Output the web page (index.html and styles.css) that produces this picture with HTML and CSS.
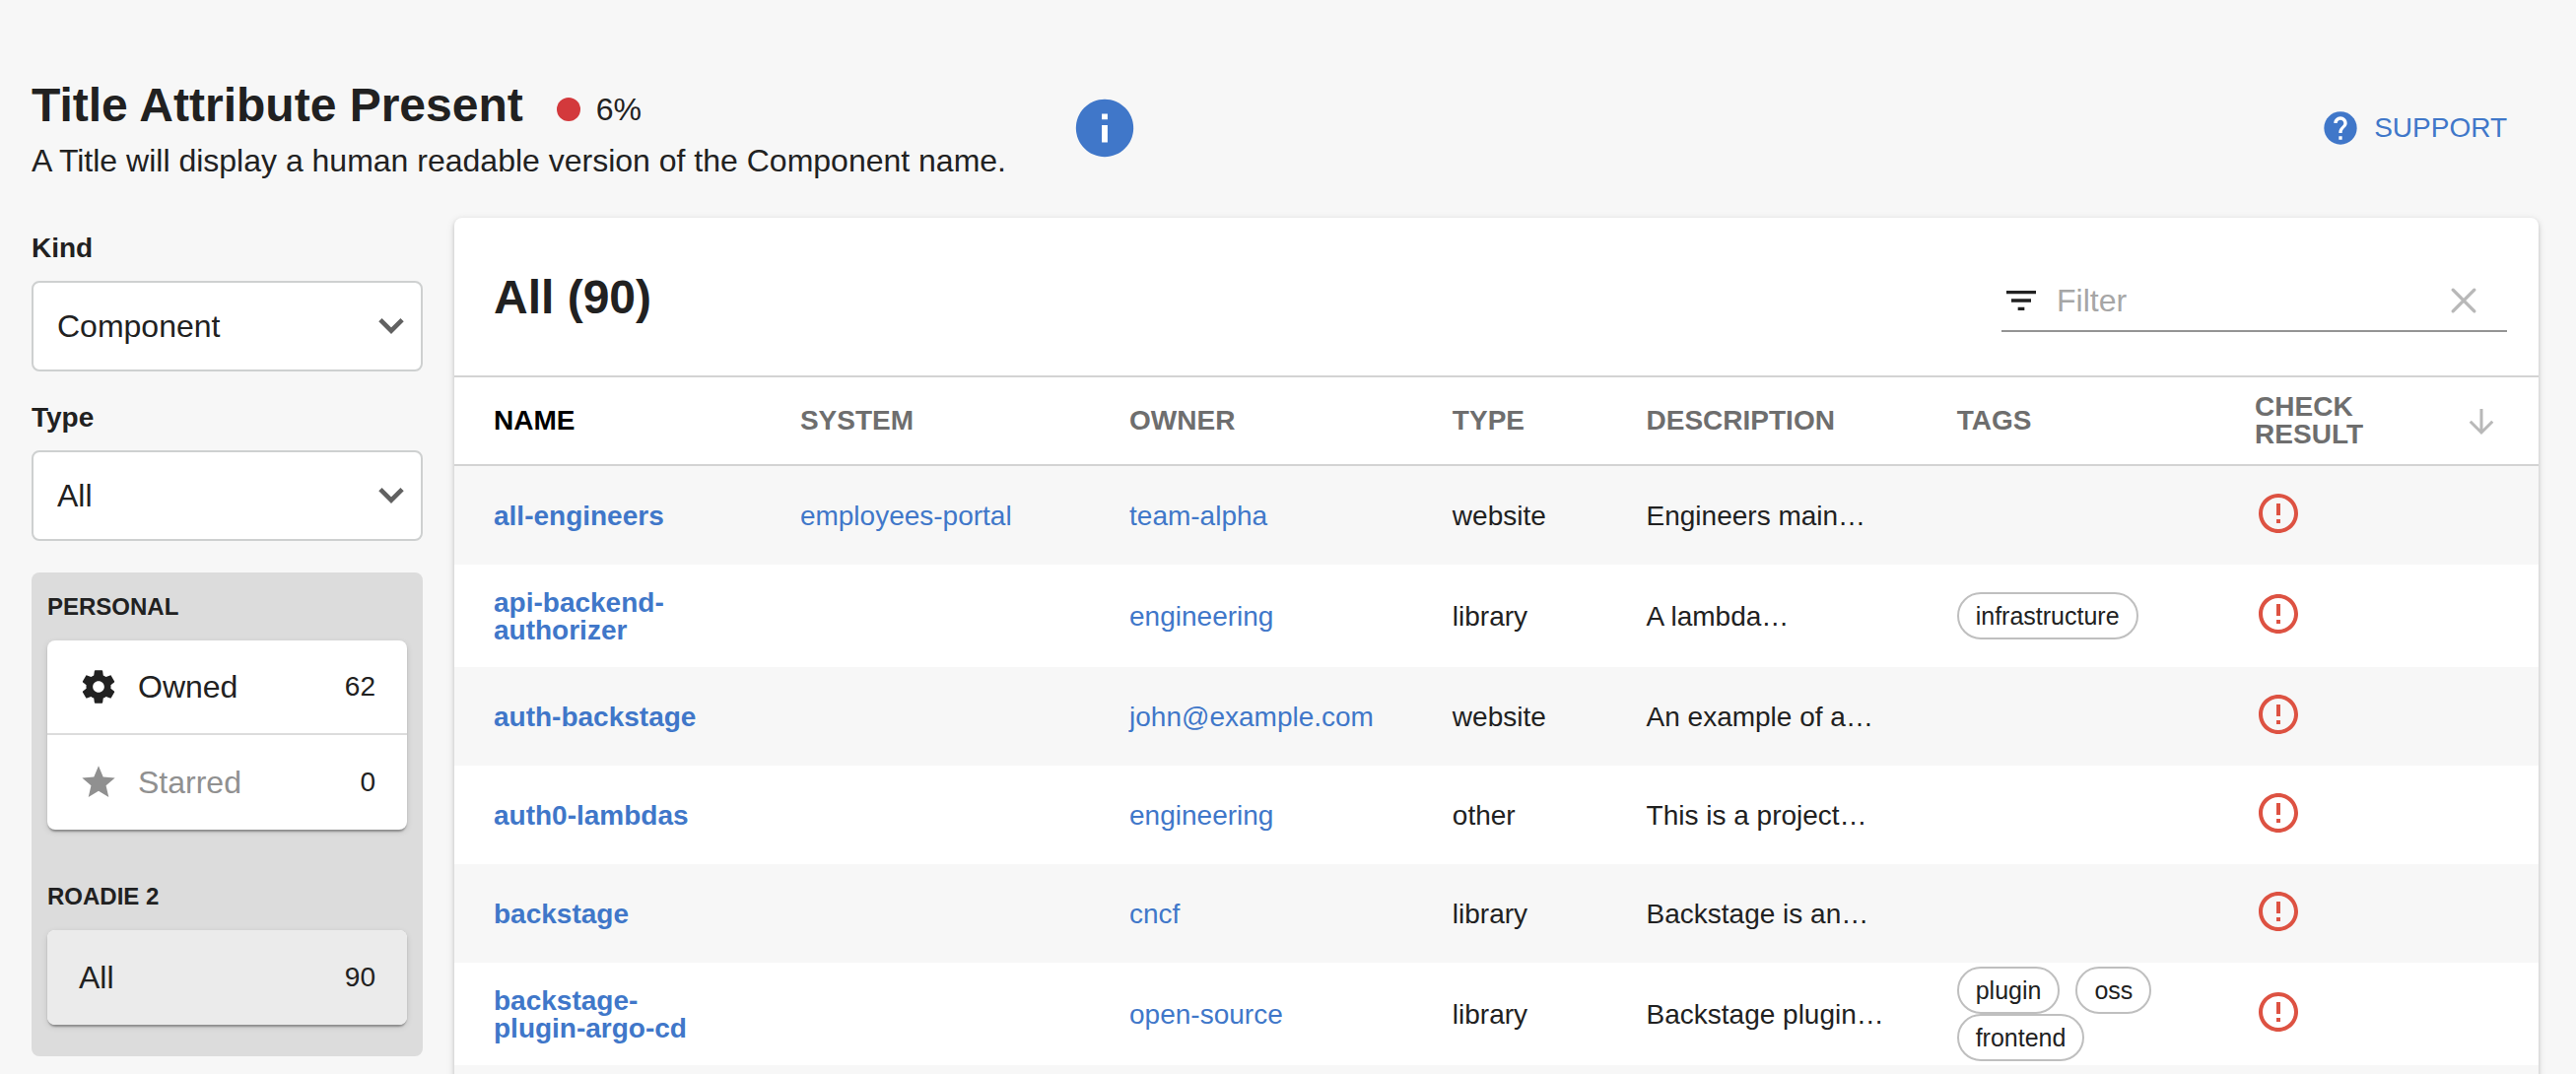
FILE: index.html
```html
<!DOCTYPE html>
<html lang="en">
<head>
<meta charset="utf-8">
<meta name="viewport" content="width=device-width, initial-scale=1">
<title>Title Attribute Present</title>
<link rel="stylesheet" href="styles.css">
</head>
<body>
<svg class="sprite" aria-hidden="true">
  <symbol id="chevron" viewBox="0 0 24 24"><path d="M2.500 6.500L12 16l9.500-9.500" fill="none" stroke="currentColor" stroke-width="4"/></symbol>
  <symbol id="alert" viewBox="0 0 24 24"><path fill="currentColor" d="M11 15h2v2h-2zm0-8h2v6h-2zm.99-5C6.470 2 2 6.480 2 12s4.470 10 9.990 10C17.520 22 22 17.520 22 12S17.520 2 11.990 2zM12 20c-4.420 0-8-3.580-8-8s3.580-8 8-8 8 3.580 8 8-3.580 8-8 8z"/></symbol>
</svg>
<div class="page">
  <header class="page-header">
    <div class="heading">
      <div class="title-row">
        <h1>Title Attribute Present</h1>
        <div class="score"><span class="dot"></span>6%</div>
      </div>
      <p class="subtitle">A Title will display a human readable version of the Component name.</p>
    </div>
    <button class="info" type="button" aria-label="Information">
      <svg viewBox="0 0 24 24"><path fill="currentColor" d="M12 2C6.480 2 2 6.480 2 12s4.480 10 10 10 10-4.480 10-10S17.520 2 12 2z"/><path fill="#fff" d="M11 11h2v6h-2zM11 7h2v2h-2z"/></svg>
    </button>
    <button class="support" type="button">
      <svg viewBox="0 0 24 24"><path fill="currentColor" d="M12 2C6.480 2 2 6.480 2 12s4.480 10 10 10 10-4.480 10-10S17.520 2 12 2z"/><path fill="#fff" d="M13 19h-2v-2h2v2zm2.070-7.750l-.9.920C13.450 12.900 13 13.500 13 15h-2v-.5c0-1.100.450-2.100 1.170-2.830l1.240-1.260c.370-.360.590-.860.590-1.410 0-1.100-.9-2-2-2s-2 .9-2 2H8c0-2.210 1.790-4 4-4s4 1.790 4 4c0 .880-.360 1.680-.930 2.250z"/></svg>
      SUPPORT
    </button>
  </header>

  <div class="content">
    <aside class="sidebar">
      <div class="field">
        <label for="kind">Kind</label>
        <div class="select">
          <select id="kind"><option>Component</option></select>
          <svg><use href="#chevron"/></svg>
        </div>
      </div>
      <div class="field">
        <label for="type">Type</label>
        <div class="select">
          <select id="type"><option>All</option></select>
          <svg><use href="#chevron"/></svg>
        </div>
      </div>
      <nav class="picker">
        <h3>PERSONAL</h3>
        <div class="picker-group">
          <button class="picker-item" type="button">
            <svg viewBox="0 0 24 24"><path fill="currentColor" d="M19.430 12.980c.040-.320.070-.640.070-.980s-.030-.660-.070-.980l2.110-1.650c.190-.150.240-.420.120-.640l-2-3.460c-.120-.220-.390-.3-.610-.220l-2.490 1c-.520-.4-1.080-.730-1.690-.980l-.380-2.650C14.460 2.180 14.250 2 14 2h-4c-.250 0-.460.180-.490.420l-.380 2.650c-.610.250-1.170.590-1.690.980l-2.490-1c-.230-.090-.490 0-.610.220l-2 3.460c-.130.220-.070.490.120.640l2.110 1.650c-.040.320-.070.650-.070.980s.030.660.070.980l-2.110 1.650c-.190.150-.240.420-.120.640l2 3.460c.120.220.390.3.610.220l2.490-1c.520.4 1.080.730 1.690.980l.380 2.650c.030.240.240.420.490.420h4c.250 0 .460-.180.490-.420l.380-2.650c.610-.250 1.170-.590 1.690-.980l2.490 1c.230.090.490 0 .610-.220l2-3.460c.120-.220.070-.490-.120-.640l-2.110-1.650zM12 15.500c-1.930 0-3.500-1.570-3.500-3.500s1.570-3.500 3.500-3.500 3.500 1.570 3.500 3.500-1.570 3.500-3.500 3.500z"/></svg>
            <span class="name">Owned</span><span class="count">62</span>
          </button>
          <button class="picker-item" type="button">
            <svg class="muted" viewBox="0 0 24 24"><path fill="currentColor" d="M12 17.270L18.180 21l-1.640-7.030L22 9.240l-7.190-.610L12 2 9.190 8.630 2 9.240l5.460 4.730L5.820 21z"/></svg>
            <span class="name muted">Starred</span><span class="count">0</span>
          </button>
        </div>
        <h3>ROADIE 2</h3>
        <div class="picker-group">
          <button class="picker-item selected" type="button"><span class="name">All</span><span class="count">90</span></button>
        </div>
      </nav>
    </aside>

    <main class="card">
      <div class="card-header">
        <h2>All (90)</h2>
        <div class="filter">
          <svg viewBox="0 0 24 24"><path fill="currentColor" d="M10 18h4v-2h-4v2zM3 6v2h18V6H3zm3 7h12v-2H6v2z"/></svg>
          <input type="text" placeholder="Filter" aria-label="Filter">
          <button class="clear" type="button" aria-label="Clear filter"><svg viewBox="0 0 24 24"><path d="M5.500 5.500l13 13M18.500 5.500l-13 13" fill="none" stroke="currentColor" stroke-width="2" stroke-linecap="round"/></svg></button>
        </div>
      </div>
      <table>
        <colgroup>
          <col class="c-name"><col class="c-system"><col class="c-owner"><col class="c-type"><col class="c-desc"><col class="c-tags"><col class="c-check">
        </colgroup>
        <thead>
          <tr>
            <th class="sorted">NAME</th><th>SYSTEM</th><th>OWNER</th><th>TYPE</th><th>DESCRIPTION</th><th>TAGS</th>
            <th><div class="check-head"><span>CHECK<br>RESULT</span><svg viewBox="0 0 24 24"><path d="M12 4v15M4.500 12.500L12 20l7.500-7.500" fill="none" stroke="currentColor" stroke-width="2"/></svg></div></th>
          </tr>
        </thead>
        <tbody>
          <tr><td><a class="entity" href="#">all-engineers</a></td><td><a href="#">employees-portal</a></td><td><a href="#">team-alpha</a></td><td>website</td><td>Engineers main…</td><td></td><td><svg class="status"><use href="#alert"/></svg></td></tr>
          <tr class="tall"><td><a class="entity" href="#">api-backend-authorizer</a></td><td></td><td><a href="#">engineering</a></td><td>library</td><td>A lambda…</td><td class="tag-cell"><div class="tags"><span class="chip">infrastructure</span></div></td><td><svg class="status"><use href="#alert"/></svg></td></tr>
          <tr><td><a class="entity" href="#">auth-backstage</a></td><td></td><td><a href="#">john@example.com</a></td><td>website</td><td>An example of a…</td><td></td><td><svg class="status"><use href="#alert"/></svg></td></tr>
          <tr><td><a class="entity" href="#">auth0-lambdas</a></td><td></td><td><a href="#">engineering</a></td><td>other</td><td>This is a project…</td><td></td><td><svg class="status"><use href="#alert"/></svg></td></tr>
          <tr><td><a class="entity" href="#">backstage</a></td><td></td><td><a href="#">cncf</a></td><td>library</td><td>Backstage is an…</td><td></td><td><svg class="status"><use href="#alert"/></svg></td></tr>
          <tr class="tall"><td><a class="entity" href="#">backstage-plugin-argo-cd</a></td><td></td><td><a href="#">open-source</a></td><td>library</td><td>Backstage plugin…</td><td class="tag-cell"><div class="tags"><span class="chip">plugin</span><span class="chip">oss</span><span class="chip">frontend</span></div></td><td><svg class="status"><use href="#alert"/></svg></td></tr>
          <tr><td></td><td></td><td></td><td></td><td></td><td></td><td></td></tr>
        </tbody>
      </table>
    </main>
  </div>
</div>
</body>
</html>
```
FILE: styles.css
```css
* { box-sizing: border-box; }

body {
  margin: 0;
  background: #f7f7f7;
  color: #212121;
  font-family: "Liberation Sans", Arial, sans-serif;
  font-size: 28px;
}

h1, h2, h3, p { margin: 0; }
a { color: #4077c9; text-decoration: none; }
button, input, select { font: inherit; color: inherit; }
button { border: 0; padding: 0; background: none; cursor: pointer; }
svg { display: block; flex: none; }
.sprite { position: absolute; width: 0; height: 0; }

.page {
  height: 100vh;
  overflow: hidden;
  padding: 69px 38px 0 32px;
}

/* Page header */
.page-header { display: flex; align-items: center; }
.heading { padding-top: 10px; }
.title-row { display: flex; align-items: baseline; gap: 34px; }
h1, h2 { font-size: 48px; line-height: 56px; font-weight: 700; }
.score { display: flex; align-items: center; gap: 16px; font-size: 32px; line-height: 40px; }
.dot { width: 24px; height: 24px; border-radius: 50%; background: #d3393c; }
.subtitle { font-size: 32px; line-height: 56px; }
.info { margin-left: 65px; color: #4077c9; }
.info svg { width: 70px; height: 70px; }
.support {
  display: flex;
  align-items: center;
  gap: 14px;
  margin-left: auto;
  margin-right: 32px;
  color: #4077c9;
}
.support svg { width: 40px; height: 40px; }

/* Columns below the header */
.content { display: flex; align-items: flex-start; gap: 32px; margin-top: 30px; }

.sidebar { flex: none; width: 397px; padding-top: 13px; }
.field { margin-bottom: 28px; }
.field label { display: block; margin-bottom: 15px; line-height: 36px; font-weight: 700; }
.field + .field label { margin-top: 29px; }
.select { display: grid; align-items: center; }
.select select, .select svg { grid-area: 1 / 1; }
.select select {
  appearance: none;
  width: 100%;
  height: 92px;
  padding: 0 64px 0 24px;
  border: 2px solid #ced0d0;
  border-radius: 8px;
  background: #fff;
  font-size: 32px;
}
.select svg {
  justify-self: end;
  width: 28px;
  height: 28px;
  margin-right: 18px;
  color: #616161;
  pointer-events: none;
}

.picker { margin-top: 32px; padding: 19px 16px 32px; border-radius: 8px; background: #dcdcdc; }
.picker h3 { margin-bottom: 18px; font-size: 24px; line-height: 32px; }
.picker-group {
  overflow: hidden;
  border-radius: 8px;
  background: #fff;
  box-shadow: 0 4px 2px -2px rgba(0, 0, 0, .2), 0 2px 2px rgba(0, 0, 0, .14), 0 2px 6px rgba(0, 0, 0, .12);
}
.picker-group + h3 { margin-top: 52px; }
.picker-item {
  display: flex;
  align-items: center;
  gap: 20px;
  width: 100%;
  height: 96px;
  padding: 0 32px;
  text-align: left;
}
.picker-item:not(:last-child) { border-bottom: 2px solid #dcdcdc; }
.picker-item svg { width: 40px; height: 40px; }
.picker-item .name { flex: 1; font-size: 32px; }
.picker-item .muted { color: #909090; }
.picker-item.selected { background: #ebebeb; }

/* Table card */
.card {
  flex: 1;
  min-width: 0;
  border-radius: 8px;
  background: #fff;
  box-shadow: 0 2px 4px rgba(0, 0, 0, .14), 0 2px 8px rgba(0, 0, 0, .12);
}
.card-header {
  display: flex;
  align-items: center;
  justify-content: space-between;
  height: 160px;
  padding: 2px 32px 0 40px;
}
.filter {
  display: flex;
  align-items: center;
  gap: 16px;
  width: 513px;
  height: 70px;
  padding: 8px 24px 0 0;
  border-bottom: 2px solid #949494;
}
.filter svg { width: 40px; height: 40px; }
.filter input {
  flex: 1;
  min-width: 0;
  padding: 0;
  border: 0;
  outline: 0;
  background: none;
  font-size: 32px;
}
.filter input::placeholder { color: #a6a6a6; opacity: 1; }
.clear { color: #b8b8b8; }

table { width: 100%; table-layout: fixed; border-collapse: separate; border-spacing: 0; line-height: 28px; }
.c-name { width: 14.7%; }
.c-system { width: 15.8%; }
.c-owner { width: 15.5%; }
.c-type { width: 9.3%; }
.c-desc { width: 14.9%; }
.c-tags { width: 14.3%; }
.c-check { width: 15.5%; }
th {
  height: 92px;
  padding: 0 32px 0 40px;
  border: solid #d3d3d3;
  border-width: 2px 0;
  color: #6e6e6e;
  text-align: left;
}
th.sorted { color: #000; }
.check-head { display: flex; align-items: center; justify-content: space-between; }
.check-head svg { width: 36px; height: 36px; margin-right: 8px; color: #b8b8b8; }
td { height: 100px; padding: 2px 32px 0 40px; white-space: nowrap; }
td:first-child { white-space: normal; }
.tall td { height: 104px; }
.tall .tag-cell { padding-top: 0; }
tbody tr:nth-child(odd) { background: #f7f7f7; }
.entity { font-weight: 700; }
.tags { display: flex; flex-wrap: wrap; column-gap: 16px; }
.chip {
  height: 48px;
  padding: 0 17px;
  border: 2px solid #bfbfbf;
  border-radius: 24px;
  font-size: 25px;
  line-height: 44px;
}
.status { width: 48px; height: 48px; margin-bottom: 6px; color: #dd5242; }
```
